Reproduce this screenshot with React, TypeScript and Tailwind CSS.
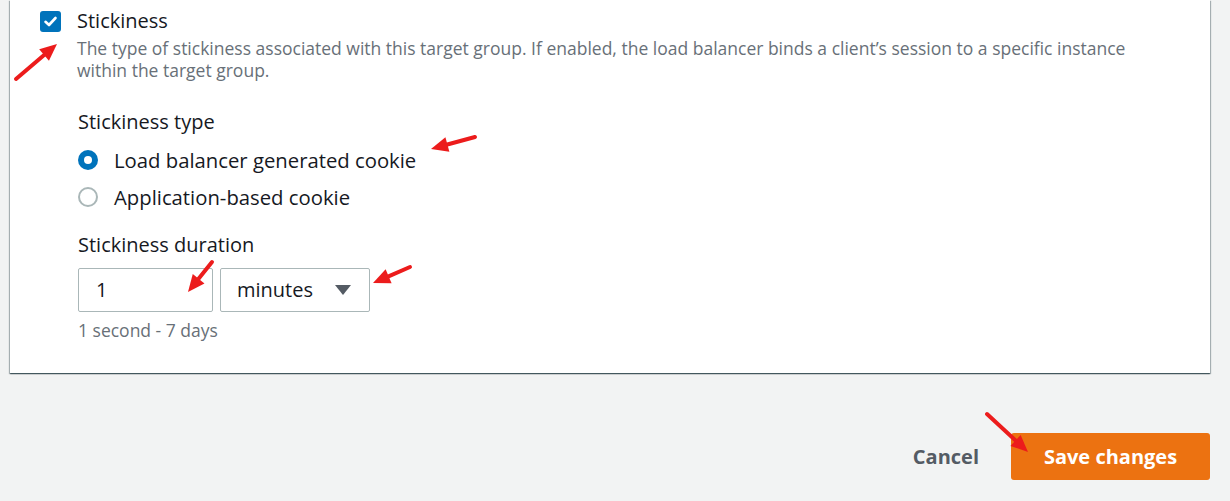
import React from "react";

function Arrow({ x1, y1, x2, y2 }: { x1: number; y1: number; x2: number; y2: number }) {
  const dx = x2 - x1;
  const dy = y2 - y1;
  const len = Math.sqrt(dx * dx + dy * dy);
  const ux = dx / len;
  const uy = dy / len;
  const hl = 17;
  const hw = 7.5;
  const bx = x2 - ux * hl;
  const by = y2 - uy * hl;
  const p1 = `${bx - uy * hw},${by + ux * hw}`;
  const p2 = `${bx + uy * hw},${by - ux * hw}`;
  return (
    <g>
      <line x1={x1} y1={y1} x2={bx + ux * 2} y2={by + uy * 2} stroke="#ec1c1c" strokeWidth={4} strokeLinecap="round" />
      <polygon points={`${x2},${y2} ${p1} ${p2}`} fill="#ec1c1c" />
    </g>
  );
}

export default function App() {
  return (
    <div
      className="relative w-[1230px] h-[501px] overflow-hidden bg-[#f2f3f3]"
      style={{ fontFamily: '"Open Sans", "Noto Sans", Arial, sans-serif' }}
    >
      <div className="ml-[10px] w-[1200px] h-[373px] bg-white shadow-[0_1px_1px_0_rgba(0,28,36,0.5),1px_1px_1px_0_rgba(0,28,36,0.25),-1px_1px_1px_0_rgba(0,28,36,0.25)] pl-[30px] pt-[11px]">
        <div className="flex gap-[16px]">
          <div className="w-[21px] h-[21px] rounded-[3px] bg-[#0073bb] flex items-center justify-center shrink-0">
            <svg width="15" height="15" viewBox="0 0 15 15">
              <path d="M2.5 7.8 L6 11 L12.5 4" fill="none" stroke="white" strokeWidth="2.6" strokeLinecap="round" strokeLinejoin="round" />
            </svg>
          </div>
          <div className="-mt-[2px]">
            <div className="text-[20px] leading-[24px] text-[#16191f]">Stickiness</div>
            <div className="text-[17.5px] leading-[22px] text-[#687078] mt-[4px] w-[1080px]">
              The type of stickiness associated with this target group. If enabled, the load balancer binds a client’s session to a specific instance within the target group.
            </div>
          </div>
        </div>
        <div className="ml-[38px] mt-[29px]">
          <div className="text-[20px] leading-[24px] text-[#16191f]">Stickiness type</div>
          <div className="mt-[16px] flex flex-col gap-[17px]">
            <div className="flex items-center gap-[16px] h-[20px]">
              <div className="w-[20px] h-[20px] rounded-full bg-[#0073bb] flex items-center justify-center">
                <div className="w-[8px] h-[8px] rounded-full bg-white" />
              </div>
              <span className="text-[20.3px] leading-[24px] text-[#16191f]">Load balancer generated cookie</span>
            </div>
            <div className="flex items-center gap-[16px] h-[20px]">
              <div className="w-[20px] h-[20px] rounded-full border-2 border-[#aab7b8] bg-white" />
              <span className="text-[20.3px] leading-[24px] text-[#16191f]">Application-based cookie</span>
            </div>
          </div>
          <div className="mt-[26px] text-[20px] leading-[24px] text-[#16191f]">Stickiness duration</div>
          <div className="mt-[11px] flex gap-[7px]">
            <div className="w-[135px] h-[44px] border border-[#aab7b8] rounded-[2px] flex items-center pl-[17px] text-[20px] text-[#16191f]">1</div>
            <div className="w-[150px] h-[44px] border border-[#aab7b8] rounded-[2px] flex items-center pl-[16px] pr-[17px] justify-between text-[20px] text-[#16191f]">
              <span>minutes</span>
              <svg width="18" height="12" viewBox="0 0 18 12">
                <polygon points="1,1 17,1 9,11" fill="#545b64" />
              </svg>
            </div>
          </div>
          <div className="mt-[7px] text-[17.5px] leading-[22px] text-[#687078]">1 second - 7 days</div>
        </div>
      </div>
      <div className="flex justify-end items-center pr-[20px] mt-[60px] gap-[32px]">
        <span className="text-[20px] font-bold text-[#545b64]">Cancel</span>
        <div className="w-[199px] h-[47px] rounded-[3px] bg-[#ec7211] flex items-center justify-center text-[20px] font-bold text-white">
          Save changes
        </div>
      </div>
      <svg className="absolute left-0 top-0 pointer-events-none" width="1230" height="501">
        <Arrow x1={16} y1={79} x2={57} y2={44} />
        <Arrow x1={475} y1={137} x2={431} y2={149} />
        <Arrow x1={212} y1={262} x2={188} y2={292} />
        <Arrow x1={410} y1={267} x2={373} y2={283} />
        <Arrow x1={987} y1={414} x2={1028} y2={452} />
      </svg>
    </div>
  );
}
